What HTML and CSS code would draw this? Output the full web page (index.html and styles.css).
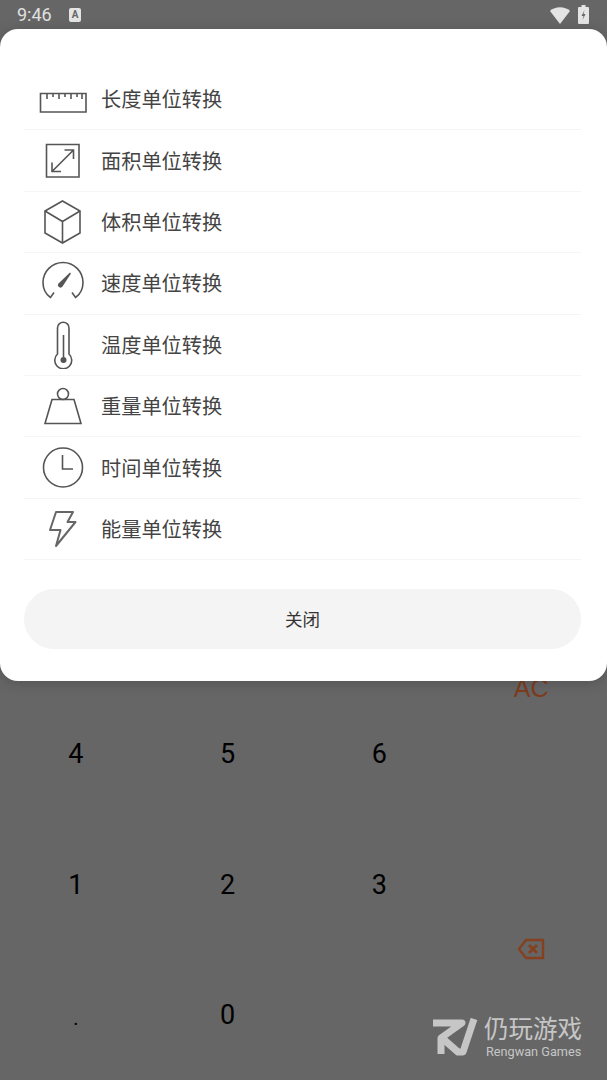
FILE: index.html
```html
<!DOCTYPE html>
<html lang="zh-CN">
<head>
    <meta charset="UTF-8">
    <meta name="viewport" content="width=device-width, initial-scale=1.0">
    <title>单位转换</title>
    <link rel="stylesheet" href="styles.css">
</head>
<body>
    <div class="screen">
        <div class="status-bar">
            <span class="clock">9:46</span>
            <span class="notice">A</span>
            <span class="status-right">
                <svg width="20" height="18" viewBox="0 0 20 18"><path d="M0 5 C5 0 15 0 20 5 L10 18 Z" fill="#e4e4e4"/></svg>
                <svg width="11" height="19" viewBox="0 0 11 19"><path d="M3.500 0h4v2H10a1 1 0 0 1 1 1v15a1 1 0 0 1-1 1H1a1 1 0 0 1-1-1V3a1 1 0 0 1 1-1h2.500z" fill="#e4e4e4"/><path d="M6.500 5 3.500 11h2l-1 4 3-6h-2z" fill="#666"/></svg>
            </span>
        </div>

        <!-- keypad behind the sheet -->
        <div class="keypad">
            <div class="key key-4">4</div>
            <div class="key key-5">5</div>
            <div class="key key-6">6</div>
            <div class="key key-1">1</div>
            <div class="key key-2">2</div>
            <div class="key key-3">3</div>
            <div class="key key-dot">.</div>
            <div class="key key-0">0</div>
            <div class="key key-ac">AC</div>
            <div class="key key-back">
                <svg width="28" height="22" viewBox="0 0 28 22" fill="none" stroke="#85401f" stroke-width="2.400"><path d="M9 2H26V20H9L2 11Z" stroke-linejoin="round"/><path d="M12 7 20 15M20 7 12 15" stroke-width="2.800"/></svg>
            </div>
        </div>

        <div class="sheet">
            <ul class="unit-list">
                <li class="unit-row">
                    <span class="unit-icon">
                        <svg width="48" height="48" viewBox="0 0 48 48"><path d="M1.500 18.500H47V37H1.500Z"/><path d="M8 19V24M14 19V22M20 19V24M26 19V22M32 19V24M38 19V22M43 19V24"/></svg>
                    </span>
                    <span class="unit-name">长度单位转换</span>
                </li>
                <li class="unit-row">
                    <span class="unit-icon">
                        <svg width="48" height="48" viewBox="0 0 48 48"><path d="M7.500 7.500H40V40H7.500Z"/><path d="M13 34.500 34.500 13M25.500 13H34.500V22M13 25.500V34.500H22"/></svg>
                    </span>
                    <span class="unit-name">面积单位转换</span>
                </li>
                <li class="unit-row">
                    <span class="unit-icon">
                        <svg width="48" height="48" viewBox="0 0 48 48"><path d="M23.500 3 41 13V35L23.500 45 6 35V13Z"/><path d="M6 13 23.500 23.500 41 13M23.500 23.500V45"/></svg>
                    </span>
                    <span class="unit-name">体积单位转换</span>
                </li>
                <li class="unit-row">
                    <span class="unit-icon">
                        <svg width="48" height="48" viewBox="0 0 48 48"><path d="M15 33.500 11.500 38.500C6.500 35 4 29.500 4 23.500A20 20 0 0 1 44 23.500C44 29.500 41.500 35 36.500 38.500L33 33.500"/><path class="solid" d="M19.500 24.500 31 13.500 32 14.500 23.500 27.500A2.500 2.500 0 0 1 19.500 24.500Z"/></svg>
                    </span>
                    <span class="unit-name">速度单位转换</span>
                </li>
                <li class="unit-row">
                    <span class="unit-icon">
                        <svg width="48" height="48" viewBox="0 0 48 48"><path d="M18.500 33V7A5.500 5.500 0 0 1 30 7V33A8.500 8.500 0 1 1 18.500 33Z"/><path d="M24.500 14V36"/><circle class="solid" cx="24.500" cy="39" r="3"/></svg>
                    </span>
                    <span class="unit-name">温度单位转换</span>
                </li>
                <li class="unit-row">
                    <span class="unit-icon">
                        <svg width="48" height="48" viewBox="0 0 48 48"><circle cx="24" cy="12" r="5.500"/><path d="M13 17.500H35L42 41.500H6Z"/></svg>
                    </span>
                    <span class="unit-name">重量单位转换</span>
                </li>
                <li class="unit-row">
                    <span class="unit-icon">
                        <svg width="48" height="48" viewBox="0 0 48 48"><circle cx="24" cy="23.500" r="19.500"/><path d="M23.500 11V25H34"/></svg>
                    </span>
                    <span class="unit-name">时间单位转换</span>
                </li>
                <li class="unit-row">
                    <span class="unit-icon">
                        <svg width="48" height="48" viewBox="0 0 48 48"><path class="bolt" d="M17 7H34L28.500 17H36.500L17 41 21.500 25H11Z"/></svg>
                    </span>
                    <span class="unit-name">能量单位转换</span>
                </li>
            </ul>
            <button class="close-btn" type="button">关闭</button>
        </div>

        <div class="watermark">
            <svg width="46" height="39" viewBox="0 0 46 39" fill="none" stroke="#c6c6c6" stroke-width="7" stroke-linejoin="round"><path d="M1 5H30L9 20V36"/><path d="M10 20 26 34H31L42 1"/></svg>
            <div class="watermark-text">
                <div class="watermark-cn">仍玩游戏</div>
                <div class="watermark-en">Rengwan Games</div>
            </div>
        </div>
    </div>
</body>
</html>
```

FILE: styles.css
```css
* { box-sizing: border-box; }
html, body { margin: 0; padding: 0; }
body { background-color: #666; font-family: Roboto, "Noto Sans CJK SC", sans-serif; }
.screen { position: relative; width: 607px; height: 1080px; overflow: hidden; }

.status-bar { display: flex; align-items: center; height: 29px; padding: 0 18px 0 17px; }
.clock { font-size: 18px; color: #e0e0e0; width: 52px; }
.notice { width: 12px; height: 14px; background: #e4e4e4; border-radius: 2px; color: #666; font-size: 10px; font-weight: bold; line-height: 14px; text-align: center; }
.status-right { display: flex; align-items: center; gap: 8px; margin-left: auto; }

.keypad { display: grid; grid-template-columns: repeat(4, 151.750px); grid-auto-rows: 65.250px; margin-top: 594px; }
.key { display: flex; align-items: center; justify-content: center; color: #000; font-size: 27px; padding-top: 1px; }
.key-4 { grid-area: 2 / 1 / span 2; }
.key-5 { grid-area: 2 / 2 / span 2; }
.key-6 { grid-area: 2 / 3 / span 2; }
.key-1 { grid-area: 4 / 1 / span 2; }
.key-2 { grid-area: 4 / 2 / span 2; }
.key-3 { grid-area: 4 / 3 / span 2; }
.key-dot { grid-area: 6 / 1 / span 2; font-size: 20px; padding-top: 6px; }
.key-0 { grid-area: 6 / 2 / span 2; }
.key-ac { grid-area: 1 / 4 / span 2; color: #7d3c1f; font-family: "Liberation Sans", sans-serif; font-size: 25px; }
.key-back { grid-area: 5 / 4 / span 2; padding: 0 0 1px; }

/* bottom sheet over the keypad */
.sheet { position: absolute; top: 29px; left: 0; width: 607px; height: 652px; padding: 40px 26px 0 24px; background: #fff; border-radius: 18px; box-shadow: 0 2px 14px rgba(0,0,0,0.18); }
.unit-list { list-style: none; margin: 0; padding: 0; }
.unit-row { display: flex; align-items: center; height: 61.400px; border-bottom: 1.500px solid #f5f5f5; }
.unit-icon { display: flex; align-items: center; justify-content: center; width: 77px; }
.unit-icon svg { fill: none; stroke: #555; stroke-width: 1.600; }
.unit-icon .solid { fill: #555; stroke: none; }
.unit-icon .bolt { stroke: #666; stroke-width: 2; stroke-linejoin: round; }
.unit-name { color: #444; font-family: "Noto Sans CJK SC", sans-serif; font-size: 20.200px; padding-bottom: 1px; }

.close-btn { display: block; width: 557px; height: 60px; margin-top: 29px; padding-bottom: 3px; border: none; border-radius: 30px; background: #f4f4f4; color: #333; font-family: "Noto Sans CJK SC", sans-serif; font-size: 17.500px; }

.watermark { position: absolute; left: 432px; top: 1018px; display: flex; gap: 6px; }
.watermark-text { color: #c6c6c6; }
.watermark-cn { font-size: 24.500px; line-height: 24px; white-space: nowrap; }
.watermark-en { font-size: 12.700px; line-height: 14px; margin-top: 3px; margin-left: 2px; white-space: nowrap; }
```
